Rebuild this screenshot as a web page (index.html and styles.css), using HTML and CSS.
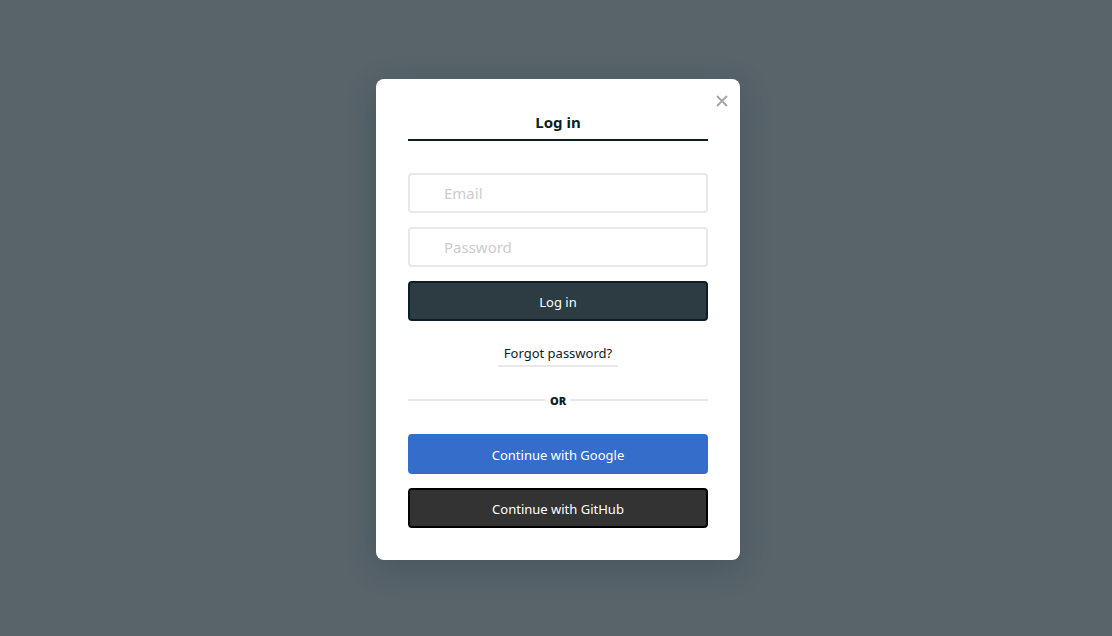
FILE: index.html
```html
<!DOCTYPE html>
<html lang="en">
<head>
<meta charset="utf-8">
<meta name="viewport" content="width=device-width, initial-scale=1">
<title>Log in</title>
<link rel="stylesheet" href="styles.css">
</head>
<body>
<main class="overlay">
  <section class="modal" role="dialog" aria-modal="true" aria-labelledby="login-title">
    <button class="close" type="button" aria-label="Close">
      <svg width="12" height="12" viewBox="0 0 12 12" aria-hidden="true"><path d="M1 1L11 11M11 1L1 11" fill="none" stroke="currentColor" stroke-width="1.9"/></svg>
    </button>
    <h1 class="title" id="login-title">Log in</h1>
    <form class="form">
      <input class="field" type="email" placeholder="Email" aria-label="Email">
      <input class="field" type="password" placeholder="Password" aria-label="Password">
      <button class="button button-primary" type="submit">Log in</button>
    </form>
    <a class="forgot" href="#">Forgot password?</a>
    <div class="divider">OR</div>
    <div class="providers">
      <button class="button button-google" type="button">Continue with Google</button>
      <button class="button button-github" type="button">Continue with GitHub</button>
    </div>
  </section>
</main>
</body>
</html>
```

FILE: styles.css
```css
* {
  box-sizing: border-box;
}

body {
  margin: 0;
  color: #0b1e26;
  font-family: "Noto Sans", "Open Sans", sans-serif;
  font-size: 13px;
}

.overlay {
  display: flex;
  align-items: center;
  justify-content: center;
  min-height: 100vh;
  padding: 2px 0 0 4px;
  background: #58646a;
}

.modal {
  position: relative;
  display: flex;
  flex-direction: column;
  width: 100%;
  max-width: 364px;
  padding: 32px;
  border-radius: 8px;
  background: #fff;
  box-shadow: 0 8px 32px rgba(11, 30, 38, 0.2);
}

.close {
  position: absolute;
  top: 10px;
  right: 6px;
  display: flex;
  align-items: center;
  justify-content: center;
  width: 24px;
  height: 24px;
  padding: 0;
  border: 0;
  background: none;
  color: #a0a6a9;
  cursor: pointer;
}

.title {
  margin: 0 0 32px;
  padding-bottom: 6px;
  border-bottom: 2px solid #0b1e26;
  font-size: 15px;
  font-weight: 700;
  line-height: 22px;
  text-align: center;
}

.form,
.providers {
  display: flex;
  flex-direction: column;
  gap: 14px;
}

.field,
.button {
  width: 100%;
  height: 40px;
  border: 2px solid;
  border-radius: 4px;
  font-family: inherit;
}

.field {
  padding: 0 34px;
  border-color: #e7e9e9;
  background: #fff;
  color: inherit;
  font-size: 15px;
}

.field::placeholder {
  color: #ccc;
  opacity: 1;
}

.button {
  padding: 2px 16px 0;
  color: #fff;
  font-size: 13px;
  cursor: pointer;
}

.button-primary {
  border-color: #0b1e26;
  background: #2d3b42;
}

.button-google {
  border-color: #356dca;
  background: #356dca;
}

.button-github {
  border-color: #000;
  background: #333;
}

.forgot {
  align-self: center;
  margin: 22px 0 24px;
  padding: 0 6px 2px;
  border-bottom: 2px solid #e7e9e9;
  color: inherit;
  line-height: 20px;
  text-decoration: none;
}

.divider {
  display: flex;
  align-items: center;
  gap: 4px;
  margin-bottom: 24px;
  font-size: 11px;
  font-weight: 900;
  line-height: 19px;
}

.divider::before,
.divider::after {
  content: "";
  flex: 1;
  height: 2px;
  background: #e7e9e9;
}
```
